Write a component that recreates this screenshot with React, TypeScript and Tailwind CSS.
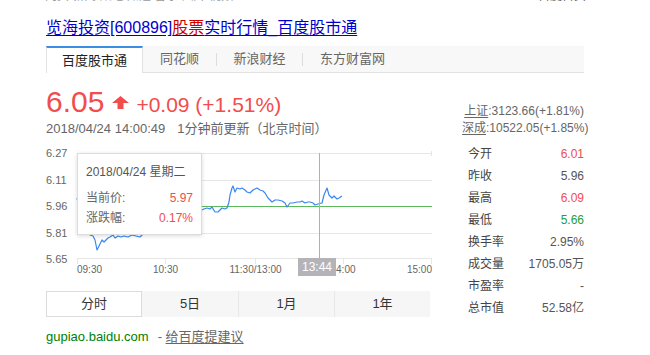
import React from "react";

const pts: [number, number][] = [
  [77, 198], [80, 210], [84, 222], [88, 232], [90, 235], [93, 236], [95, 240], [97, 250], [99, 246], [100, 244],
  [102, 240], [104, 242], [106, 240], [108, 238], [110, 237], [113, 235], [115, 238], [118, 236], [121, 237],
  [124, 236], [128, 237], [132, 235], [136, 236], [140, 237], [142, 235], [146, 232], [150, 228], [155, 225],
  [160, 222], [165, 220], [170, 218], [175, 216], [180, 215], [185, 213], [190, 212], [195, 210], [199, 211],
  [201.7, 210], [204, 209], [207, 208], [210, 209], [212, 207], [215, 212], [218, 212], [220, 210], [222, 208],
  [225, 209], [227, 208], [229, 202], [230, 195], [232, 188], [233, 186], [235, 192], [237, 188], [240, 189],
  [242, 188], [245, 190], [247, 192], [250, 193], [253, 190], [255, 189], [257, 188], [260, 190], [263, 191],
  [265, 193], [268, 198], [270, 200], [272, 202], [275, 200], [278, 200], [282, 201], [285, 203], [287, 207],
  [290, 203], [293, 203], [297, 202], [300, 202], [302, 201], [305, 203], [308, 202], [310, 202], [313, 203],
  [315, 205], [318, 204], [322, 203], [324, 195], [327, 188], [329, 195], [332, 198], [334, 196], [337, 199],
  [339, 198], [342, 196],
];

const linePath = pts
  .map(([x, y], i) => `${i === 0 ? "M" : "L"}${(x - 46).toFixed(1)} ${(y - 147).toFixed(1)}`)
  .join(" ");

function Chart() {
  return (
    <div className="relative w-[386px] h-[130px] mt-[10px]">
      <svg className="absolute left-0 top-0" width="386" height="130" viewBox="0 0 386 130">
        <g stroke="#e6e6e6" strokeWidth="1">
          <line x1="31" y1="6.5" x2="386" y2="6.5" />
          <line x1="31" y1="33.5" x2="386" y2="33.5" />
          <line x1="31" y1="86.5" x2="386" y2="86.5" />
          <line x1="31" y1="111.5" x2="386" y2="111.5" />
          <line x1="31.5" y1="111" x2="31.5" y2="117" />
          <line x1="119.5" y1="111" x2="119.5" y2="117" />
          <line x1="209.5" y1="111" x2="209.5" y2="117" />
          <line x1="297.5" y1="111" x2="297.5" y2="117" />
          <line x1="385.5" y1="111" x2="385.5" y2="117" />
          <line x1="385.5" y1="4" x2="385.5" y2="9" />
        </g>
        <line x1="31" y1="59.5" x2="386" y2="59.5" stroke="#5cb85c" strokeWidth="1.2" />
        <path d={linePath} fill="none" stroke="#3b87f0" strokeWidth="1.2" strokeLinejoin="round" />
        <line x1="273.5" y1="6" x2="273.5" y2="111" stroke="#b0b0b0" strokeWidth="1" />
      </svg>

      <div className="absolute left-0 top-[-0.5px] text-[11px] leading-[13px] text-[#666]">6.27</div>
      <div className="absolute left-0 top-[26.5px] text-[11px] leading-[13px] text-[#666]">6.11</div>
      <div className="absolute left-0 top-[52.5px] text-[11px] leading-[13px] text-[#666]">5.96</div>
      <div className="absolute left-0 top-[79.5px] text-[11px] leading-[13px] text-[#666]">5.81</div>
      <div className="absolute left-0 top-[105.5px] text-[11px] leading-[13px] text-[#666]">5.65</div>

      <div className="absolute left-[31px] top-[117px] text-[10px] leading-[12px] text-[#666]">09:30</div>
      <div className="absolute left-[99.5px] w-[40px] text-center top-[117px] text-[10px] leading-[12px] text-[#666]">10:30</div>
      <div className="absolute left-[169.5px] w-[80px] text-center top-[117px] text-[10px] leading-[12px] text-[#666]">11:30/13:00</div>
      <div className="absolute left-[277px] w-[40px] text-center top-[117px] text-[10px] leading-[12px] text-[#666]">14:00</div>
      <div className="absolute right-0 top-[117px] text-[10px] leading-[12px] text-[#666]">15:00</div>

      <div className="absolute left-[252px] top-[111px] w-[38px] h-[18px] bg-[#b4b4b8] text-white text-[12px] leading-[18px] text-center">
        13:44
      </div>

      <div className="absolute left-[31px] top-[6px] w-[125px] h-[82px] bg-white border border-[#dcdcdc] shadow-[0_1px_4px_rgba(0,0,0,0.15)] pt-[9px] pl-[8px] pr-[8px]">
        <div className="text-[12px] leading-[18px] text-[#555]">2018/04/24 星期二</div>
        <div className="mt-[6.5px] flex justify-between text-[12px] leading-[20px]">
          <span className="text-[#666]">当前价:</span>
          <span className="text-[#f24c4c]">5.97</span>
        </div>
        <div className="flex justify-between text-[12px] leading-[20px]">
          <span className="text-[#666]">涨跌幅:</span>
          <span className="text-[#f24c4c]">0.17%</span>
        </div>
      </div>
    </div>
  );
}

function Row({ label, value, color }: { label: string; value: string; color: string }) {
  return (
    <div className="flex justify-between h-[22px] items-center text-[12px] pl-[6px]">
      <span className="text-[#444]">{label}</span>
      <span className={color}>{value}</span>
    </div>
  );
}

export default function App() {
  return (
    <div className="w-[650px] h-[355px] bg-white overflow-hidden font-['Liberation_Sans','Noto_Sans_CJK_SC',sans-serif]">
      <div className="h-[4px] overflow-hidden flex justify-between pl-[45px] pr-[64px]">
        <div className="mt-[-12px] text-[12px] leading-[16px] text-[#999] whitespace-nowrap">
          网页 新闻 贴吧 知道 音乐 图片 视频
        </div>
        <div className="mt-[-12px] text-[12px] leading-[16px] text-[#666] whitespace-nowrap">百度首页</div>
      </div>

      <div className="pl-[46px] w-[584px]">
        <div className="mt-[14px] h-[20px] text-[16px] leading-[20px] whitespace-nowrap">
          <a className="text-[#0000cc] underline underline-offset-[2px] decoration-[#0000cc]">
            览海投资[600896]<span className="text-[#cc0000]">股票</span>实时行情_百度股市通
          </a>
        </div>

        <div className="mt-[8px] flex h-[27px] bg-[#f8f8f8] border-b border-[#e1e1e1]">
          <div className="w-[97px] h-[27px] shrink-0 bg-white border-t-2 border-t-[#3a8ee6] border-x border-x-[#e1e1e1] flex items-center justify-center text-[13px] text-[#222]">
            百度股市通
          </div>
          <div className="w-[73px] flex items-center justify-center text-[13px] text-[#666]">同花顺</div>
          <div className="w-px h-[13px] mt-[7px] bg-[#ddd]"></div>
          <div className="w-[85px] flex items-center justify-center text-[13px] text-[#666]">新浪财经</div>
          <div className="w-px h-[13px] mt-[7px] bg-[#ddd]"></div>
          <div className="w-[99px] flex items-center justify-center text-[13px] text-[#666]">东方财富网</div>
        </div>

        <div className="flex">
          <div className="w-[386px]">
            <div className="mt-[12px] h-[34px] leading-[34px] whitespace-nowrap text-[#f24c4c]">
              <span className="text-[30px]">6.05</span>
              <svg className="inline-block ml-[8px] mb-[3px] align-baseline" width="17" height="13" viewBox="0 0 17 13">
                <path d="M8.5 0 L17 7 L11.5 7 L11.5 13 L5.5 13 L5.5 7 L0 7 Z" fill="#f24c4c" />
              </svg>
              <span className="text-[21px] ml-[7px]">+0.09 (+1.51%)</span>
            </div>
            <div className="mt-[2px] h-[16px] leading-[16px] text-[13px] text-[#666] whitespace-nowrap">
              <span>2018/04/24 14:00:49</span>
              <span className="ml-[12px]">1分钟前更新（北京时间）</span>
            </div>

            <Chart />

            <div className="mt-[14px] flex w-[384px] h-[26px] bg-[#f6f6f6] text-[13px] text-[#333]">
              <div className="w-[96px] bg-white border border-[#dcdcdc] flex items-center justify-center">分时</div>
              <div className="w-[96px] flex items-center justify-center">5日</div>
              <div className="w-[96px] border-l border-[#e8e8e8] flex items-center justify-center">1月</div>
              <div className="w-[96px] border-l border-[#e8e8e8] flex items-center justify-center">1年</div>
            </div>

            <div className="mt-[11px] h-[18px] leading-[18px] text-[13px] whitespace-nowrap">
              <span className="text-[#008000]">gupiao.baidu.com</span>
              <span className="ml-[9px] text-[#666]">- </span>
              <a className="text-[#666] underline underline-offset-[2px]">给百度提建议</a>
            </div>
          </div>

          <div className="ml-[30px] w-[122px] pt-[30px]">
            <div className="text-right text-[12px] leading-[17px] text-[#666] whitespace-nowrap">
              <span className="underline underline-offset-[2px]">上证</span>:3123.66(+1.81%)
            </div>
            <div className="text-right text-[12px] leading-[17px] text-[#666] whitespace-nowrap">
              <span className="underline underline-offset-[2px]">深成</span>:10522.05(+1.85%)
            </div>
            <div className="mt-[6px]">
              <Row label="今开" value="6.01" color="text-[#f24c4c]" />
              <Row label="昨收" value="5.96" color="text-[#555]" />
              <Row label="最高" value="6.09" color="text-[#f24c4c]" />
              <Row label="最低" value="5.66" color="text-[#1e9e3a]" />
              <Row label="换手率" value="2.95%" color="text-[#555]" />
              <Row label="成交量" value="1705.05万" color="text-[#555]" />
              <Row label="市盈率" value="-" color="text-[#555]" />
              <Row label="总市值" value="52.58亿" color="text-[#555]" />
            </div>
          </div>
        </div>
      </div>
    </div>
  );
}
